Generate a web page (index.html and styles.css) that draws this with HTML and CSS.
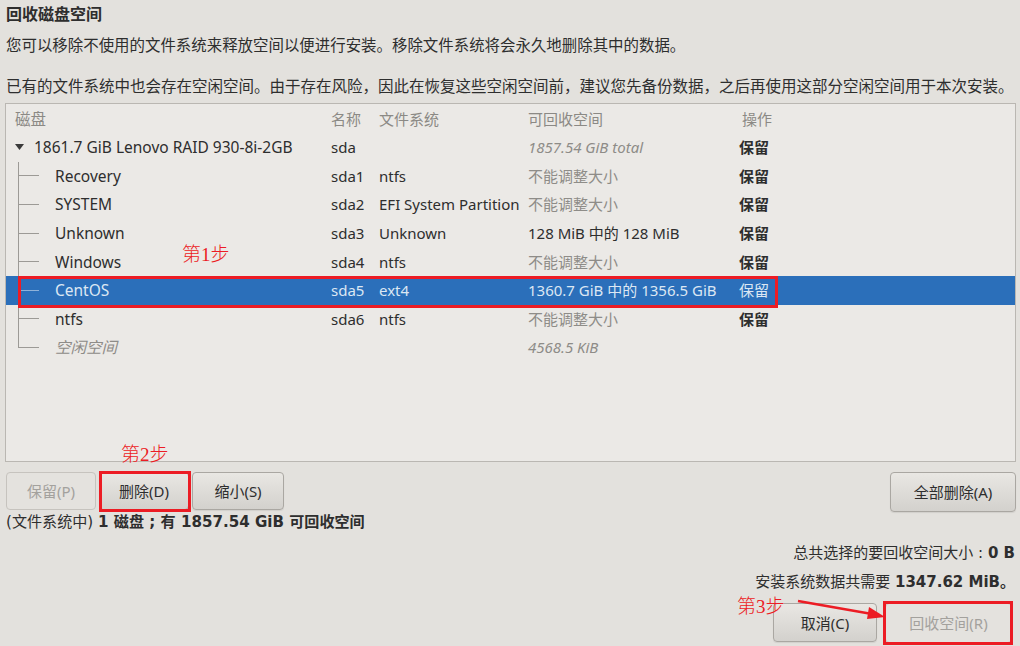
FILE: index.html
```html
<!DOCTYPE html>
<html lang="zh-CN">
<head>
  <meta charset="UTF-8">
  <meta name="viewport" content="width=device-width, initial-scale=1.0">
  <title>回收磁盘空间</title>
  <link rel="stylesheet" href="styles.css">
</head>
<body>
<div class="page">
  <h1 class="title">回收磁盘空间</h1>
  <p class="intro">您可以移除不使用的文件系统来释放空间以便进行安装。移除文件系统将会永久地删除其中的数据。</p>
  <p class="intro intro-wide">已有的文件系统中也会存在空闲空间。由于存在风险，因此在恢复这些空闲空间前，建议您先备份数据，之后再使用这部分空闲空间用于本次安装。</p>

  <div class="tree">
    <div class="row head">
      <div class="cell first">磁盘</div>
      <div class="cell">名称</div>
      <div class="cell">文件系统</div>
      <div class="cell">可回收空间</div>
      <div class="cell">操作</div>
    </div>
    <div class="row">
      <div class="cell first">
        <svg class="expander" width="9" height="6" viewBox="0 0 9 6"><polygon points="0,0 9,0 4.5,6" fill="#3a3a3a"/></svg>
        1861.7 GiB Lenovo RAID 930-8i-2GB
      </div>
      <div class="cell">sda</div>
      <div class="cell"></div>
      <div class="cell muted italic">1857.54 GiB total</div>
      <div class="cell action">保留</div>
    </div>
    <div class="row">
      <div class="cell first"><span class="branch"></span>Recovery</div>
      <div class="cell">sda1</div>
      <div class="cell">ntfs</div>
      <div class="cell muted">不能调整大小</div>
      <div class="cell action">保留</div>
    </div>
    <div class="row">
      <div class="cell first"><span class="branch"></span>SYSTEM</div>
      <div class="cell">sda2</div>
      <div class="cell">EFI System Partition</div>
      <div class="cell muted">不能调整大小</div>
      <div class="cell action">保留</div>
    </div>
    <div class="row">
      <div class="cell first"><span class="branch"></span>Unknown</div>
      <div class="cell">sda3</div>
      <div class="cell">Unknown</div>
      <div class="cell">128 MiB 中的 128 MiB</div>
      <div class="cell action">保留</div>
    </div>
    <div class="row">
      <div class="cell first"><span class="branch"></span>Windows</div>
      <div class="cell">sda4</div>
      <div class="cell">ntfs</div>
      <div class="cell muted">不能调整大小</div>
      <div class="cell action">保留</div>
    </div>
    <div class="row selected">
      <div class="cell first"><span class="branch"></span>CentOS</div>
      <div class="cell">sda5</div>
      <div class="cell">ext4</div>
      <div class="cell">1360.7 GiB 中的 1356.5 GiB</div>
      <div class="cell action">保留</div>
    </div>
    <div class="row">
      <div class="cell first"><span class="branch"></span>ntfs</div>
      <div class="cell">sda6</div>
      <div class="cell">ntfs</div>
      <div class="cell muted">不能调整大小</div>
      <div class="cell action">保留</div>
    </div>
    <div class="row">
      <div class="cell first muted italic"><span class="branch last"></span>空闲空间</div>
      <div class="cell"></div>
      <div class="cell"></div>
      <div class="cell muted italic">4568.5 KiB</div>
      <div class="cell"></div>
    </div>
  </div>

  <div class="toolbar">
    <div class="btn-group">
      <button class="btn" disabled>保留(P)</button>
      <button class="btn">删除(D)</button>
      <button class="btn btn-shrink">缩小(S)</button>
    </div>
    <button class="btn btn-all">全部删除(A)</button>
  </div>
  <div class="info">(文件系统中) <b>1 磁盘 ; 有 1857.54 GiB 可回收空间</b></div>

  <div class="summary">
    <div class="sum-line">总共选择的要回收空间大小 : <b>0 B</b></div>
    <div class="sum-line second">安装系统数据共需要 <b>1347.62 MiB。</b></div>
  </div>
  <div class="actions">
    <button class="btn btn-cancel">取消(C)</button>
    <button class="btn btn-reclaim" disabled>回收空间(R)</button>
  </div>

  <!-- annotations drawn over the screen -->
  <div class="note note-1">第1步</div>
  <div class="mark mark-1"></div>
  <div class="note note-2">第2步</div>
  <div class="mark mark-2"></div>
  <div class="note note-3">第3步</div>
  <div class="mark mark-3"></div>
  <svg class="arrow" width="96" height="26" viewBox="0 0 96 26">
    <line x1="6" y1="4" x2="80" y2="17" stroke="#ec1c24" stroke-width="2.5"/>
    <polygon points="93,20 77,10 75,22" fill="#ec1c24"/>
  </svg>
</div>
</body>
</html>
```

FILE: styles.css
```css
* {
  margin: 0;
  padding: 0;
  box-sizing: border-box;
}

body {
  background-color: #e3e1dd;
  font-family: "Noto Sans", "Noto Sans CJK SC", sans-serif;
  font-size: 15px;
  line-height: 20px;
  color: #2e2e2e;
  width: 1020px;
  height: 646px;
  overflow: hidden;
}

.page {
  position: relative;
  padding: 4px 4px 0 6px;
  height: 646px;
}

.title {
  font-size: 16px;
  font-weight: bold;
  line-height: 20px;
}

.intro {
  line-height: 20px;
  height: 20px;
  margin-top: 11px;
  font-size: 15.45px;
  white-space: nowrap;
}

.intro-wide {
  margin-top: 21px;
  font-size: 15.5px;
}

.tree {
  margin-top: 7px;
  margin-left: -1px;
  width: 1011px;
  height: 359px;
  border: 1px solid #bab7b2;
  background-color: #ebe9e6;
}

.row {
  display: grid;
  grid-template-columns: 325px 48px 149px 214px 1fr;
  height: 28.6px;
  align-items: center;
  white-space: nowrap;
}

.row.head {
  height: 29px;
  color: #8b8985;
}

.cell {
  display: flex;
  align-items: center;
  height: 100%;
}

.cell.first {
  padding-left: 9px;
  font-size: 15.5px;
}

.expander {
  margin-right: 10px;
}

.branch {
  align-self: stretch;
  width: 21px;
  margin-left: 3px;
  margin-right: 16px;
  background:
    linear-gradient(#9c9a96, #9c9a96) left top / 1px 100% no-repeat,
    linear-gradient(#9c9a96, #9c9a96) left center / 100% 1px no-repeat;
}

.branch.last {
  background:
    linear-gradient(#9c9a96, #9c9a96) left top / 1px 50% no-repeat,
    linear-gradient(#9c9a96, #9c9a96) left center / 100% 1px no-repeat;
}

.muted {
  color: #8e8c88;
}

.italic {
  font-style: italic;
}

.action {
  font-weight: bold;
  margin-left: -3px;
}

.row.selected {
  background-color: #2b6fba;
  color: #dce7f3;
}

.row.selected .action {
  font-weight: normal;
}

.row.selected .branch {
  background:
    linear-gradient(#8fb2d9, #8fb2d9) left top / 1px 100% no-repeat,
    linear-gradient(#8fb2d9, #8fb2d9) left center / 100% 1px no-repeat;
}

.toolbar {
  display: flex;
  justify-content: space-between;
  align-items: flex-end;
  margin-top: 10px;
}

.btn-group {
  display: flex;
  gap: 3px;
}

.btn {
  font-family: "Noto Sans", "Noto Sans CJK SC", sans-serif;
  font-size: 15px;
  line-height: 20px;
  color: #2e2e2e;
  height: 38px;
  width: 90px;
  border: 1px solid #aaa7a2;
  border-radius: 4px;
  background: linear-gradient(#e9e7e3, #d3d1cd);
  box-shadow: 0 1px 1px rgba(0, 0, 0, 0.08);
}

.btn:disabled {
  color: #a3a19d;
  background: #e4e2de;
  border-color: #c6c3be;
  box-shadow: none;
}

.btn-shrink {
  width: 92px;
}

.btn-all {
  width: 126px;
  height: 40px;
  margin-bottom: -2px;
}

.info {
  font-family: "DejaVu Sans", "Noto Sans CJK SC", sans-serif;
  font-size: 15.1px;
  line-height: 20px;
  margin-top: 2px;
}

.summary {
  font-family: "DejaVu Sans", "Noto Sans CJK SC", sans-serif;
  margin-top: 11px;
  text-align: right;
  padding-right: 1px;
}

.sum-line {
  line-height: 20px;
}

.sum-line.second {
  margin-top: 9px;
}

.actions {
  display: flex;
  justify-content: flex-end;
  gap: 8px;
  margin-top: 11px;
  padding-right: 4px;
}

.btn-cancel {
  width: 104px;
  height: 39px;
}

.btn-reclaim {
  width: 127px;
  height: 40px;
}

.note {
  position: absolute;
  color: #ec1c24;
  font-family: "Liberation Serif", "Noto Sans CJK SC", serif;
  font-weight: 300;
  font-size: 19px;
  line-height: 22px;
}

.note-1 { left: 182px; top: 244px; }
.note-2 { left: 121px; top: 444px; }
.note-3 { left: 737px; top: 596px; }

.mark {
  position: absolute;
  border: 3px solid #ec1c24;
}

.mark-1 { left: 18px; top: 276px; width: 760px; height: 32px; }
.mark-2 { left: 99px; top: 471px; width: 92px; height: 41px; }
.mark-3 { left: 883px; top: 601px; width: 130px; height: 44px; }

.arrow {
  position: absolute;
  left: 792px;
  top: 597px;
}
```
